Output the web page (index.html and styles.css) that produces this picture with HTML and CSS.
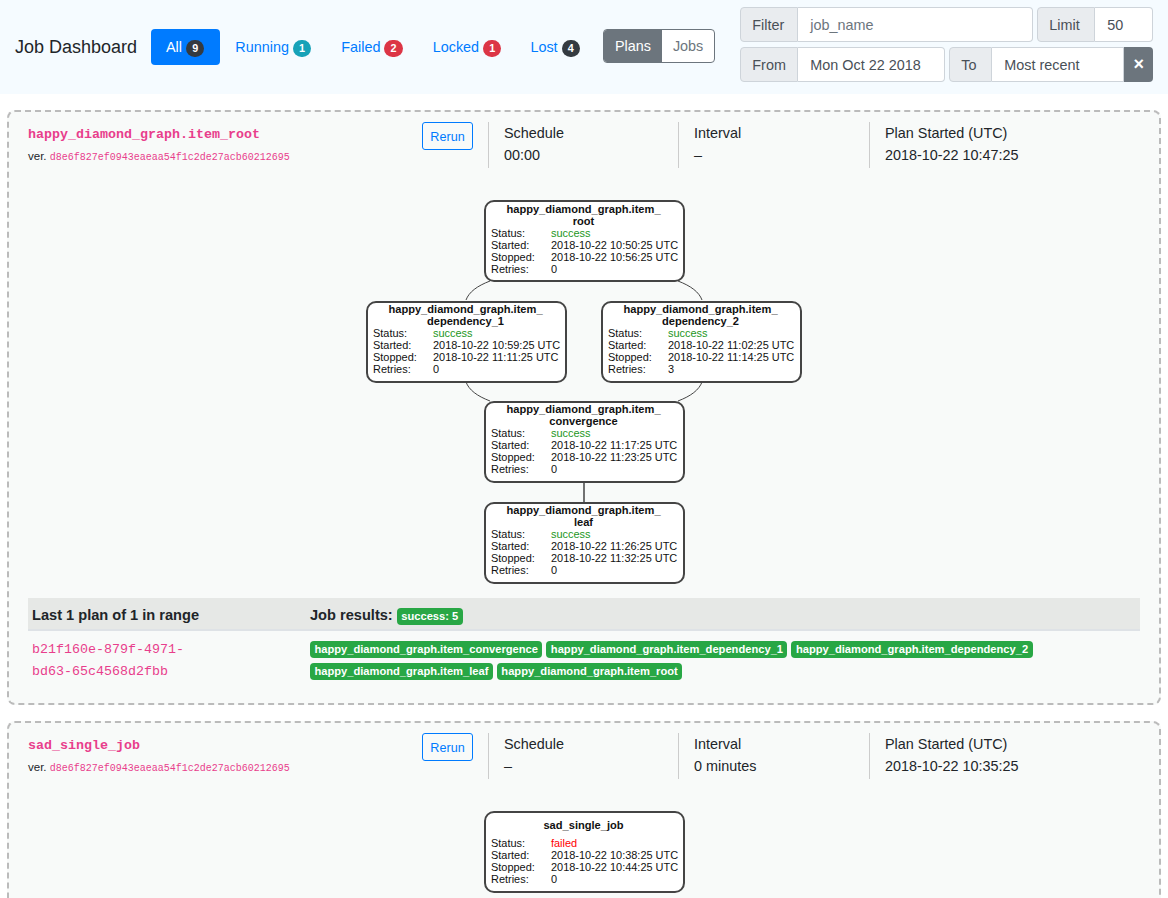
FILE: index.html
```html
<!DOCTYPE html>
<html lang="en">
<head>
<meta charset="utf-8">
<title>Job Dashboard</title>
<link rel="stylesheet" href="styles.css">
</head>
<body>
<header class="topbar">
  <div class="brand">Job Dashboard</div>
  <nav class="pills">
    <a class="pill active">All <span class="badge pill-badge dark">9</span></a>
    <a class="pill">Running <span class="badge pill-badge info">1</span></a>
    <a class="pill">Failed <span class="badge pill-badge danger">2</span></a>
    <a class="pill">Locked <span class="badge pill-badge danger">1</span></a>
    <a class="pill">Lost <span class="badge pill-badge dark">4</span></a>
  </nav>
  <div class="toggle">
    <span class="toggle-item on">Plans</span>
    <span class="toggle-item">Jobs</span>
  </div>
  <div class="filters">
    <div class="filter-row">
      <div class="igroup g-filter"><span class="addon">Filter</span><span class="field placeholder">job_name</span></div>
      <div class="igroup g-limit"><span class="addon">Limit</span><span class="field">50</span></div>
    </div>
    <div class="filter-row">
      <div class="igroup g-from"><span class="addon">From</span><span class="field">Mon Oct 22 2018</span></div>
      <div class="igroup g-to"><span class="addon">To</span><span class="field">Most recent</span><span class="clear">&times;</span></div>
    </div>
  </div>
</header>

<main class="content">
  <section class="card">
    <div class="card-head">
      <div class="ident">
        <div class="ident-text">
          <div class="job-name">happy_diamond_graph.item_root</div>
          <div class="version">ver. <code>d8e6f827ef0943eaeaa54f1c2de27acb60212695</code></div>
        </div>
        <button class="rerun">Rerun</button>
      </div>
      <div class="meta"><div>Schedule</div><div>00:00</div></div>
      <div class="meta"><div>Interval</div><div>&ndash;</div></div>
      <div class="meta"><div>Plan Started (UTC)</div><div>2018-10-22 10:47:25</div></div>
    </div>

    <div class="graph graph-diamond">
      <svg class="edges" width="1112" height="400" viewBox="0 0 1112 400">
        <path class="edge" d="M462 91 C449 96 441 102 438 110"/>
        <path class="edge" d="M650 91 C663 96 671 102 674 110"/>
        <path class="edge" d="M438 192 C441 200 449 206 462 211"/>
        <path class="edge" d="M674 192 C671 200 663 206 650 211"/>
        <path class="edge strong" d="M556 292 V312"/>
      </svg>
      <div class="node n-root">
        <div class="node-title">happy_diamond_graph.item_<br>root</div>
        <div class="node-rows">
          <span>Status:</span><span class="ok">success</span>
          <span>Started:</span><span>2018-10-22 10:50:25 UTC</span>
          <span>Stopped:</span><span>2018-10-22 10:56:25 UTC</span>
          <span>Retries:</span><span>0</span>
        </div>
      </div>
      <div class="node n-dep1">
        <div class="node-title">happy_diamond_graph.item_<br>dependency_1</div>
        <div class="node-rows">
          <span>Status:</span><span class="ok">success</span>
          <span>Started:</span><span>2018-10-22 10:59:25 UTC</span>
          <span>Stopped:</span><span>2018-10-22 11:11:25 UTC</span>
          <span>Retries:</span><span>0</span>
        </div>
      </div>
      <div class="node n-dep2">
        <div class="node-title">happy_diamond_graph.item_<br>dependency_2</div>
        <div class="node-rows">
          <span>Status:</span><span class="ok">success</span>
          <span>Started:</span><span>2018-10-22 11:02:25 UTC</span>
          <span>Stopped:</span><span>2018-10-22 11:14:25 UTC</span>
          <span>Retries:</span><span>3</span>
        </div>
      </div>
      <div class="node n-conv">
        <div class="node-title">happy_diamond_graph.item_<br>convergence</div>
        <div class="node-rows">
          <span>Status:</span><span class="ok">success</span>
          <span>Started:</span><span>2018-10-22 11:17:25 UTC</span>
          <span>Stopped:</span><span>2018-10-22 11:23:25 UTC</span>
          <span>Retries:</span><span>0</span>
        </div>
      </div>
      <div class="node n-leaf">
        <div class="node-title">happy_diamond_graph.item_<br>leaf</div>
        <div class="node-rows">
          <span>Status:</span><span class="ok">success</span>
          <span>Started:</span><span>2018-10-22 11:26:25 UTC</span>
          <span>Stopped:</span><span>2018-10-22 11:32:25 UTC</span>
          <span>Retries:</span><span>0</span>
        </div>
      </div>
    </div>

    <div class="plans">
      <div class="plans-head">
        <div class="plans-col1">Last 1 plan of 1 in range</div>
        <div>Job results: <span class="badge ok-badge">success: 5</span></div>
      </div>
      <div class="plans-row">
        <div class="plans-col1"><code class="plan-id">b21f160e-879f-4971-bd63-65c4568d2fbb</code></div>
        <div class="plan-jobs">
          <span class="badge ok-badge">happy_diamond_graph.item_convergence</span>
          <span class="badge ok-badge">happy_diamond_graph.item_dependency_1</span>
          <span class="badge ok-badge">happy_diamond_graph.item_dependency_2</span>
          <span class="badge ok-badge">happy_diamond_graph.item_leaf</span>
          <span class="badge ok-badge">happy_diamond_graph.item_root</span>
        </div>
      </div>
    </div>
  </section>

  <section class="card">
    <div class="card-head">
      <div class="ident">
        <div class="ident-text">
          <div class="job-name">sad_single_job</div>
          <div class="version">ver. <code>d8e6f827ef0943eaeaa54f1c2de27acb60212695</code></div>
        </div>
        <button class="rerun">Rerun</button>
      </div>
      <div class="meta"><div>Schedule</div><div>&ndash;</div></div>
      <div class="meta"><div>Interval</div><div>0 minutes</div></div>
      <div class="meta"><div>Plan Started (UTC)</div><div>2018-10-22 10:35:25</div></div>
    </div>
    <div class="graph graph-single">
      <div class="node n-single">
        <div class="node-title single">sad_single_job</div>
        <div class="node-rows">
          <span>Status:</span><span class="bad">failed</span>
          <span>Started:</span><span>2018-10-22 10:38:25 UTC</span>
          <span>Stopped:</span><span>2018-10-22 10:44:25 UTC</span>
          <span>Retries:</span><span>0</span>
        </div>
      </div>
    </div>
  </section>
</main>
</body>
</html>
```
FILE: styles.css
```css
* { box-sizing: border-box; }
html, body { height: 898px; overflow: hidden; }
body {
  margin: 0;
  background: #fff;
  color: #212529;
  font-family: "Liberation Sans", Arial, sans-serif;
  font-size: 14.4px;
  line-height: 22px;
}

/* top bar */
.topbar {
  display: flex;
  align-items: center;
  height: 94px;
  padding-left: 15px;
  background: #f5fbff;
}
.brand { flex: none; width: 136px; font-size: 18px; line-height: 30px; white-space: nowrap; }
.pills { display: flex; align-items: center; }
.pill {
  display: block;
  height: 36px;
  padding: 7px 15px;
  border-radius: 4px;
  color: #007bff;
  line-height: 22px;
  white-space: nowrap;
}
.pill.active { padding-right: 16px; background: #007bff; color: #fff; }
.pill:last-child { padding-left: 14px; }
.badge {
  display: inline-block;
  font-size: 11.15px;
  font-weight: 700;
  line-height: 1;
  padding: .25em .4em;
  border-radius: 4px;
  color: #fff;
  white-space: nowrap;
  vertical-align: baseline;
}
.pill-badge { font-size: 10.8px; padding: .3em .57em; border-radius: 10rem; }
.dark { background: #343a40; }
.info { background: #17a2b8; }
.danger { background: #dc3545; }
.ok-badge { background: #28a745; }

.toggle {
  display: flex;
  height: 34px;
  margin: 0 0 2px 8px;
  border: 1px solid #6c757d;
  border-radius: 4px;
  overflow: hidden;
  background: #fff;
  color: #6c757d;
}
.toggle-item { padding: 5px 11px; line-height: 22px; }
.toggle-item.on { background: #6c757d; color: #fff; }

.filters {
  align-self: flex-start;
  display: flex;
  flex-direction: column;
  gap: 5px;
  margin: 7px 0 0 25px;
}
.filter-row { display: flex; gap: 4px; }
.igroup {
  display: flex;
  height: 35px;
  color: #495057;
  white-space: nowrap;
}
.addon {
  padding: 0 11px;
  background: #e9ecef;
  border: 1px solid #ced4da;
  border-radius: 4px 0 0 4px;
  line-height: 35px;
}
.field {
  flex: 1;
  padding: 0 12px;
  background: #fff;
  border: 1px solid #ced4da;
  border-left: 0;
  border-radius: 0 4px 4px 0;
  line-height: 35px;
}
.placeholder { color: #6c757d; }
.g-filter { width: 293px; }
.g-limit { width: 116px; }
.g-from { width: 205px; }
.g-to { width: 204px; }
.g-filter .addon, .g-limit .addon, .g-from .addon { width: 58px; }
.g-to .addon { width: 43px; }
.g-to .field { border-radius: 0; }
.clear {
  width: 29px;
  background: #6c757d;
  border-radius: 0 4px 4px 0;
  color: #fff;
  font-size: 18px;
  font-weight: 700;
  line-height: 35px;
  text-align: center;
}

/* cards */
.content {
  display: flex;
  flex-direction: column;
  gap: 16px;
  padding: 16px 7px 0;
}
.card {
  flex: none;
  padding: 10px 19px 0;
  background: #f8faf9;
  border: 2px dashed #bbb;
  border-radius: 8px;
}
.card:last-child { height: 400px; }
.card-head {
  display: grid;
  grid-template-columns: 460px 190px 191px 1fr;
  height: 44px;
}
.ident { display: flex; justify-content: space-between; padding-right: 15px; }
.job-name {
  font-family: "Liberation Mono", "Courier New", monospace;
  font-size: 13.33px;
  font-weight: 700;
  color: #e83e8c;
  line-height: 24px;
  padding-top: 1px;
}
.version { font-size: 11.52px; line-height: 20px; margin-top: -1px; }
code { font-family: "Liberation Mono", "Courier New", monospace; color: #e83e8c; }
.version code { font-size: 10px; }
.rerun {
  width: 51px;
  height: 28px;
  padding: 1px 0 0;
  background: transparent;
  border: 1px solid #007bff;
  border-radius: 3px;
  color: #007bff;
  font: 12.6px/20px "Liberation Sans", Arial, sans-serif;
}
.meta {
  padding-left: 15px;
  border-left: 1px solid #ccc;
}

/* graph */
.graph { position: relative; margin-top: 24px; }
.graph-diamond { height: 400px; margin-bottom: 8px; }
.graph-single { height: 120px; }
.edges { position: absolute; left: 0; top: 0; }
.edge { fill: none; stroke: #444; stroke-width: 1; }
.edge.strong { stroke-width: 1.5; }
.node {
  position: absolute;
  width: 201px;
  height: 82px;
  padding: 0 5px;
  background: #fff;
  border: 2px solid #444;
  border-radius: 10px;
  font-size: 10.95px;
  line-height: 12px;
  color: #111;
}
.n-root { left: 456px; top: 10px; padding-top: 1px; }
.n-dep1 { left: 338px; top: 111px; }
.n-dep2 { left: 573px; top: 111px; }
.n-conv { left: 456px; top: 211px; }
.n-leaf { left: 456px; top: 312px; }
.n-single { left: 456px; top: 10px; }
.node-title { font-size: 11.1px; font-weight: 700; text-align: center; padding-right: 2px; white-space: nowrap; }
.node-title.single { padding: 6px 2px 6px 0; }
.node-rows {
  display: grid;
  grid-template-columns: 60px 1fr;
  white-space: nowrap;
}
.ok { color: #1c961c; }
.bad { color: #f00; }

/* plans */
.plans-head {
  display: flex;
  height: 33px;
  background: #e6e8e6;
  border-bottom: 2px solid #dee2e6;
  font-size: 14.6px;
  font-weight: 700;
  line-height: 34px;
}
.plans-col1 { width: 282px; padding-left: 4px; flex: none; }
.plans-row { display: flex; padding: 7px 0 20px; }
.plan-id {
  display: block;
  width: 160px;
  margin-top: 1px;
  font-size: 13.33px;
  line-height: 22px;
}
.plan-jobs { flex: 1; margin-top: -1px; margin-bottom: 1px; }
```
